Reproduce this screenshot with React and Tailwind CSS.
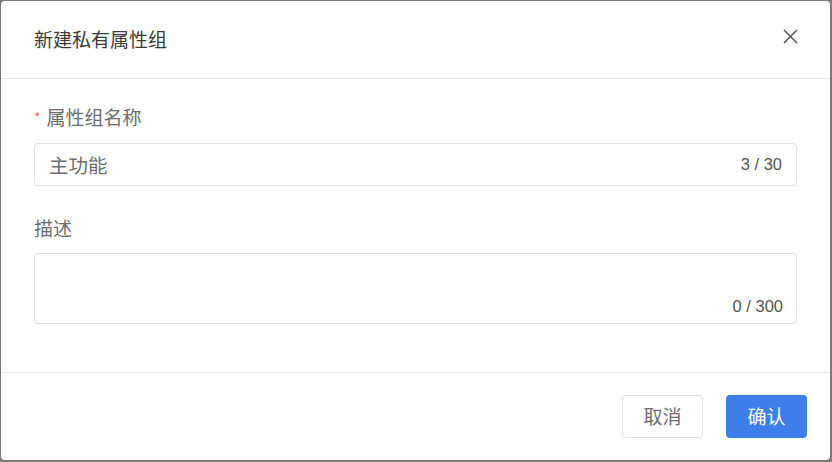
export default function App() {
  const font = { fontFamily: '"Noto Sans CJK SC", "Noto Sans", sans-serif' };
  const num = { fontFamily: '"Liberation Sans", Arial, sans-serif' };
  return (
    <div className="w-[832px] h-[462px] bg-[#7b7b7b] pt-px pl-px pr-[2px] pb-[2px]" style={font}>
      <div className="w-full h-full bg-white rounded-[4px] flex flex-col">
        <div className="h-[78px] border-b border-[#e8e8e8] flex items-center justify-between pl-[33px] pr-[33px]">
          <div className="text-[19px] text-[#3a3a3a] leading-6 mt-[-2px]">新建私有属性组</div>
          <svg width="15" height="15" viewBox="0 0 15 15" className="mr-[-1px] mt-[-6px]">
            <path d="M1 1 L14 14 M14 1 L1 14" stroke="#555" strokeWidth="1.5" fill="none" />
          </svg>
        </div>
        <div className="flex-1 px-[33px] pt-[26px]">
          <div className="flex items-center h-6 text-[19px] text-[#6b6d71] leading-6">
            <span className="text-[#f56c6c] text-[14px] mr-[6px]">*</span>
            <span>属性组名称</span>
          </div>
          <div className="mt-[14px] h-[43px] border border-[#dcdfe6] rounded-[4px] flex items-center justify-between pl-[14px] pr-[14px]">
            <span className="text-[19.5px] text-[#6b6d71]">主功能</span>
            <span className="text-[16.5px] text-[#555]" style={num}>3 / 30</span>
          </div>
          <div className="mt-[30px] h-6 text-[19px] text-[#6b6d71] leading-6">描述</div>
          <div className="mt-[13px] h-[71px] border border-[#dcdfe6] rounded-[4px] flex items-end justify-end pr-[13px] pb-[4px]">
            <span className="text-[16.5px] text-[#555]" style={num}>0 / 300</span>
          </div>
        </div>
        <div className="h-[88px] border-t border-[#e8e8e8] flex items-center justify-end gap-[23px] pr-[23px]">
          <button className="w-[81px] h-[43px] border border-[#dcdfe6] rounded-[4px] bg-white text-[19px] text-[#6b6d71]">取消</button>
          <button className="w-[81px] h-[43px] rounded-[4px] bg-[#3d7fe9] text-[19px] text-white">确认</button>
        </div>
      </div>
    </div>
  );
}
